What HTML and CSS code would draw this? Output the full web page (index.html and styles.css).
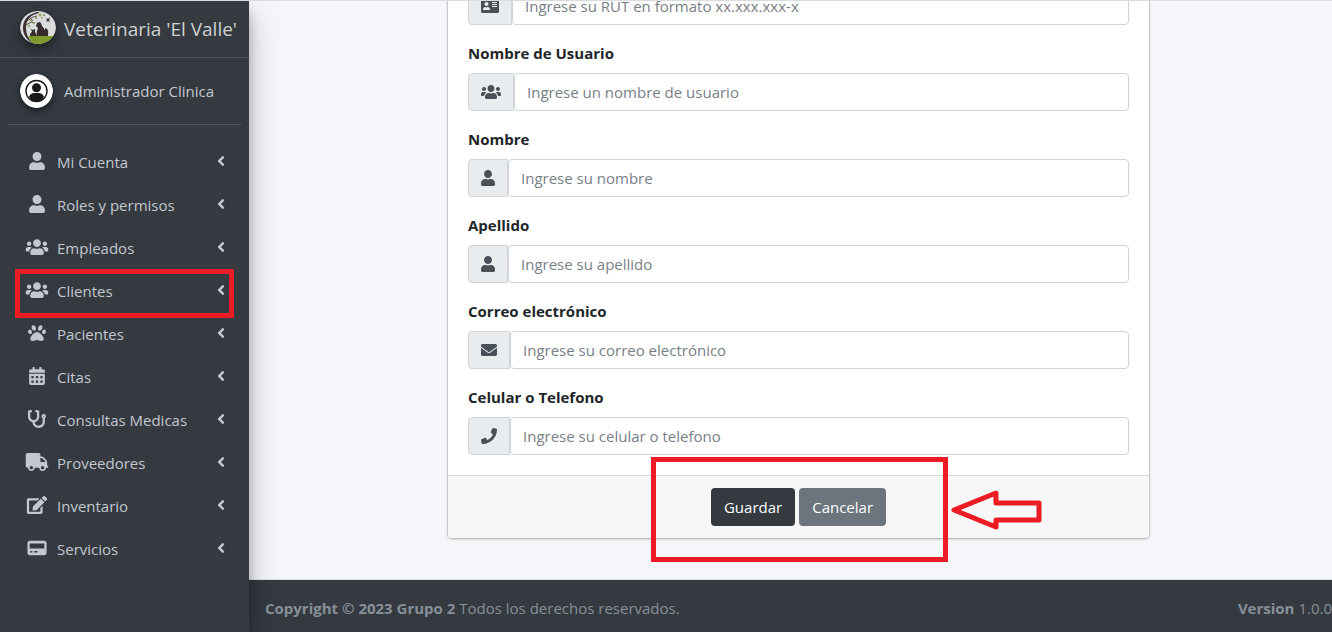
FILE: index.html
```html
<!DOCTYPE html>
<html lang="es">
<head>
<meta charset="utf-8">
<meta name="viewport" content="width=device-width, initial-scale=1">
<title>Veterinaria 'El Valle'</title>
<link rel="stylesheet" href="styles.css">
</head>
<body>
<svg class="sprite" aria-hidden="true">
  <symbol id="user" viewBox="0 0 448 512"><path d="M224 256c70.7 0 128-57.3 128-128S294.7 0 224 0 96 57.3 96 128s57.3 128 128 128zm89.6 32h-16.7c-22.2 10.2-46.9 16-72.9 16s-50.6-5.8-72.9-16h-16.7C60.2 288 0 348.2 0 422.4V464c0 26.5 21.5 48 48 48h352c26.5 0 48-21.5 48-48v-41.6c0-74.2-60.2-134.4-134.4-134.4z"/></symbol>
  <symbol id="users" viewBox="0 0 640 512"><path d="M96 224c35.3 0 64-28.7 64-64s-28.7-64-64-64-64 28.7-64 64 28.7 64 64 64zm448 0c35.3 0 64-28.7 64-64s-28.7-64-64-64-64 28.7-64 64 28.7 64 64 64zm32 32h-64c-17.6 0-33.5 7.1-45.1 18.6 40.3 22.1 68.9 62 75.1 109.4h66c17.7 0 32-14.3 32-32v-32c0-35.3-28.7-64-64-64zm-256 0c61.9 0 112-50.1 112-112S381.9 32 320 32 208 82.1 208 144s50.1 112 112 112zm76.8 32h-8.3c-20.8 10-43.9 16-68.5 16s-47.6-6-68.5-16h-8.3C179.6 288 128 339.6 128 403.2V432c0 26.5 21.5 48 48 48h288c26.5 0 48-21.5 48-48v-28.8c0-63.6-51.6-115.2-115.2-115.2zm-223.7-13.4C161.5 263.1 145.6 256 128 256H64c-35.3 0-64 28.7-64 64v32c0 17.7 14.3 32 32 32h65.9c6.3-47.4 34.9-87.3 75.2-109.4z"/></symbol>
  <symbol id="paw" viewBox="0 0 512 512"><path d="M256 224c-79.41 0-192 122.76-192 200.25 0 34.9 26.81 55.75 71.74 55.75 48.84 0 81.09-25.08 120.26-25.08 39.51 0 71.85 25.08 120.26 25.08 44.93 0 71.74-20.85 71.74-55.75C448 346.76 335.41 224 256 224zm-147.28-12.61c-10.4-34.65-42.44-57.09-71.56-50.13-29.12 6.96-44.29 40.69-33.89 75.34 10.4 34.65 42.44 57.09 71.56 50.13 29.12-6.96 44.29-40.69 33.89-75.34zm84.72-20.78c30.94-8.14 42.92-48.8 26.76-90.8-16.16-42.01-54.34-69.46-85.28-61.32-30.94 8.14-42.92 48.8-26.76 90.8 16.17 42.01 54.35 69.46 85.28 61.32zm281.39-29.35c-29.12-6.96-61.15 15.48-71.56 50.13-10.4 34.65 4.77 68.38 33.89 75.34 29.12 6.96 61.15-15.48 71.56-50.13 10.4-34.65-4.77-68.38-33.89-75.34zm-156.27 29.35c30.94 8.14 69.11-19.31 85.28-61.32 16.16-42.01 4.18-82.66-26.76-90.8-30.94-8.14-69.12 19.31-85.28 61.32-16.16 42-4.18 82.66 26.76 90.8z"/></symbol>
  <symbol id="calendar" viewBox="0 0 448 512"><path fill-rule="evenodd" d="M0 464c0 26.500 21.500 48 48 48h352c26.500 0 48-21.500 48-48V192H0v272zM64 256h64v64H64zM192 256h64v64h-64zM320 256h64v64h-64zM64 384h64v64H64zM192 384h64v64h-64zM320 384h64v64h-64zM400 64h-48V16c0-8.800-7.200-16-16-16h-32c-8.800 0-16 7.200-16 16v48H160V16c0-8.800-7.200-16-16-16h-32c-8.800 0-16 7.200-16 16v48H48C21.500 64 0 85.500 0 112v48h448v-48c0-26.500-21.500-48-48-48z"/></symbol>
  <symbol id="stethoscope" viewBox="0 0 512 512"><path d="M447.1 112c-34.2.5-62.3 28.4-63 62.6-.5 24.3 12.5 45.6 32 56.8V344c0 57.3-50.2 104-112 104-60 0-109.2-44.1-111.9-99.2C265 333.800 320 269.200 320 192V36.600c0-11.400-8.100-21.300-19.300-23.500L237.800.500c-13-2.600-25.600 5.800-28.200 18.800L206.400 35c-2.600 13 5.800 25.600 18.800 28.200l30.700 6.100v121.400c0 52.900-42.200 96.700-95.100 97.200-53.400.5-96.900-42.700-96.900-96V69.400l30.700-6.100c13-2.600 21.400-15.200 18.800-28.200l-3.100-15.700C107.700 6.400 95.100-2 82.100.6L19.300 13C8.100 15.300 0 25.100 0 36.600V192c0 77.300 55.100 142 128.100 156.800C130.700 439.200 208.600 512 304 512c97 0 176-75.400 176-168V231.400c19.100-11.100 32-31.700 32-55.400 0-35.700-29.200-64.500-64.900-64zm.9 80c-8.800 0-16-7.200-16-16s7.200-16 16-16 16 7.200 16 16-7.200 16-16 16z"/></symbol>
  <symbol id="truck" viewBox="0 0 640 512"><path d="M624 352h-16V243.900c0-12.700-5.100-24.900-14.100-33.900L494 110.100c-9-9-21.200-14.100-33.900-14.100H416V48c0-26.500-21.500-48-48-48H48C21.500 0 0 21.500 0 48v320c0 26.500 21.500 48 48 48h16c0 53 43 96 96 96s96-43 96-96h128c0 53 43 96 96 96s96-43 96-96h48c8.800 0 16-7.200 16-16v-32c0-8.800-7.200-16-16-16zM160 464c-26.500 0-48-21.500-48-48s21.500-48 48-48 48 21.500 48 48-21.500 48-48 48zm320 0c-26.500 0-48-21.500-48-48s21.500-48 48-48 48 21.500 48 48-21.500 48-48 48zm80-208H416V144h44.100l99.900 99.900V256z"/></symbol>
  <symbol id="edit" viewBox="0 0 576 512"><path d="M402.600 83.200l90.200 90.200c3.800 3.800 3.800 10 0 13.800L274.400 405.600l-92.800 10.300c-12.400 1.400-22.900-9.100-21.500-21.500l10.300-92.800L388.800 83.200c3.800-3.800 10-3.800 13.800 0zm162-22.900l-48.800-48.800c-15.200-15.200-39.900-15.200-55.200 0l-35.400 35.400c-3.800 3.800-3.800 10 0 13.800l90.200 90.200c3.800 3.800 10 3.800 13.800 0l35.400-35.400c15.200-15.300 15.200-40 0-55.200zM384 346.200V448H64V128h229.800c3.200 0 6.200-1.300 8.500-3.500l40-40c7.600-7.600 2.200-20.500-8.500-20.500H48C21.500 64 0 85.500 0 112v352c0 26.500 21.500 48 48 48h352c26.500 0 48-21.500 48-48V306.200c0-10.700-12.900-16-20.500-8.500l-40 40c-2.200 2.300-3.500 5.300-3.500 8.500z"/></symbol>
  <symbol id="service" viewBox="0 0 576 512"><path fill-rule="evenodd" d="M80 48h416c35 0 64 29 64 64v288c0 35-29 64-64 64H80c-35 0-64-29-64-64V112c0-35 29-64 64-64zM80 128v144h416V128zM96 344v40h64v-40zM208 344v40h96v-40z"/></symbol>
  <symbol id="angle" viewBox="0 0 256 512"><path d="M31.700 239l136-136c9.400-9.400 24.600-9.400 33.900 0l22.600 22.600c9.400 9.400 9.400 24.600 0 33.900L127.900 256l96.400 96.400c9.400 9.400 9.400 24.600 0 33.900L201.700 409c-9.400 9.400-24.600 9.400-33.900 0l-136-136c-9.500-9.400-9.500-24.600-.1-34z"/></symbol>
  <symbol id="idcard" viewBox="0 0 576 512"><path fill-rule="evenodd" d="M528 32H48C21.500 32 0 53.500 0 80v352c0 26.500 21.500 48 48 48h480c26.500 0 48-21.500 48-48V80c0-26.500-21.500-48-48-48zM176 128c35.300 0 64 28.700 64 64s-28.700 64-64 64-64-28.700-64-64 28.700-64 64-64zM64 372c0-46 30-84 67-84 28 13 62 13 90 0 37 0 67 38 67 84 0 7-8 12-19 12H83c-11 0-19-5-19-12zM352 128h160v32H352zM352 192h160v32H352zM352 256h160v32H352z"/></symbol>
  <symbol id="envelope" viewBox="0 0 512 512"><path d="M502.300 190.800c3.900-3.100 9.700-.2 9.700 4.700V400c0 26.500-21.500 48-48 48H48c-26.500 0-48-21.500-48-48V195.600c0-5 5.700-7.800 9.700-4.700 22.400 17.400 52.100 39.500 154.100 113.600 21.100 15.400 56.700 47.800 92.200 47.600 35.700.3 72-32.800 92.300-47.600 102-74.100 131.600-96.300 154-113.700zM256 320c23.200.4 56.600-29.200 73.400-41.400 132.700-96.300 142.800-104.700 173.400-128.700 5.800-4.500 9.200-11.500 9.200-18.900v-19c0-26.500-21.500-48-48-48H48c-26.500 0-48 21.500-48 48v19c0 7.400 3.400 14.300 9.200 18.900 30.600 23.900 40.700 32.400 173.400 128.700 16.800 12.200 50.200 41.800 73.400 41.400z"/></symbol>
  <symbol id="phone" viewBox="0 0 512 512"><path d="M493.400 24.600l-104-24c-11.300-2.600-22.900 3.300-27.500 13.900l-48 112c-4.200 9.800-1.400 21.300 6.900 28l60.600 49.600c-36 76.700-98.900 140.500-177.200 177.200l-49.600-60.600c-6.800-8.300-18.200-11.100-28-6.900l-112 48C3.900 366.500-2 378.100.6 389.400l24 104C27.100 504.200 36.700 512 48 512c256.100 0 464-207.500 464-464 0-11.200-7.700-20.900-18.600-23.400z"/></symbol>
</svg>

<div class="app">
  <aside class="sidebar">
    <a class="brand" href="#">
      <svg class="brand-logo" viewBox="0 0 36 33" aria-hidden="true">
        <defs><clipPath id="logo-clip"><ellipse cx="18" cy="16.500" rx="18" ry="16.500"/></clipPath></defs>
        <g clip-path="url(#logo-clip)">
          <rect width="36" height="33" fill="#d9dbdc"/>
          <path d="M8 25h26v8H13z" fill="#7d9a2d"/>
          <path d="M19 1C9 2 3 8 3 17c0 7 4 12 10 15.500C9 28 6 24 6 17 6 9 10 4 19 2z" fill="#3c3030"/>
          <path d="M6 10c4-1 6-5 11-5M6 14l5-3 4 1M9 6l4 4" fill="none" stroke="#4b3d3a" stroke-width=".9"/>
          <g fill="#9aab68"><circle cx="11" cy="10" r="1.200"/><circle cx="16" cy="7" r="1.300"/><circle cx="20" cy="4" r="1.500"/><circle cx="24" cy="4" r="1.200"/><circle cx="9" cy="15" r="1.200"/><circle cx="14" cy="12" r="1"/><circle cx="22" cy="7" r="1"/></g>
          <path d="M17 25c-1-3 0-5 1-8l-2-2 1-3 2-1 2 1 1 3c2 2 4 5 4 10z" fill="#342b2b"/>
          <path d="M10 25c0-3 1-3 2-4l-1-3 2 1 2-1v3l2 4zM25 25c-1-3-1-4 0-6v-2l2 1c2 2 1 4 1 7z" fill="#342b2b"/>
          <path d="M26 7l2 1 2-2-1 3 1 2-2-1-2 1 1-2z" fill="#342b2b"/>
        </g>
      </svg>
      <span>Veterinaria 'El Valle'</span>
    </a>
    <div class="account">
      <svg class="avatar" viewBox="0 0 33 34" aria-hidden="true">
        <ellipse cx="16.500" cy="17" rx="16.500" ry="17" fill="#fff"/>
        <circle cx="16.500" cy="17" r="10.500" fill="none" stroke="#17191b" stroke-width="1.400"/>
        <circle cx="16.500" cy="13.700" r="4.500" fill="#17191b"/>
        <path d="M9 23c1-3 3-4 5-4h5c2 0 4 1 5 4-2 3-4 5-7.500 5S11 26 9 23z" fill="#17191b"/>
      </svg>
      <a href="#">Administrador Clinica</a>
    </div>
    <nav>
      <ul class="menu">
        <li><a href="#"><svg class="icon"><use href="#user"/></svg><span>Mi Cuenta</span><svg class="arrow"><use href="#angle"/></svg></a></li>
        <li><a href="#"><svg class="icon"><use href="#user"/></svg><span>Roles y permisos</span><svg class="arrow"><use href="#angle"/></svg></a></li>
        <li><a href="#"><svg class="icon"><use href="#users"/></svg><span>Empleados</span><svg class="arrow"><use href="#angle"/></svg></a></li>
        <li class="marked"><a href="#"><svg class="icon"><use href="#users"/></svg><span>Clientes</span><svg class="arrow"><use href="#angle"/></svg></a></li>
        <li><a href="#"><svg class="icon"><use href="#paw"/></svg><span>Pacientes</span><svg class="arrow"><use href="#angle"/></svg></a></li>
        <li><a href="#"><svg class="icon"><use href="#calendar"/></svg><span>Citas</span><svg class="arrow"><use href="#angle"/></svg></a></li>
        <li><a href="#"><svg class="icon"><use href="#stethoscope"/></svg><span>Consultas Medicas</span><svg class="arrow"><use href="#angle"/></svg></a></li>
        <li><a href="#"><svg class="icon"><use href="#truck"/></svg><span>Proveedores</span><svg class="arrow"><use href="#angle"/></svg></a></li>
        <li><a href="#"><svg class="icon"><use href="#edit"/></svg><span>Inventario</span><svg class="arrow"><use href="#angle"/></svg></a></li>
        <li><a href="#"><svg class="icon"><use href="#service"/></svg><span>Servicios</span><svg class="arrow"><use href="#angle"/></svg></a></li>
      </ul>
    </nav>
  </aside>

  <div class="page">
    <main class="content">
      <form class="card">
        <div class="card-body">
          <div class="field">
            <div class="group"><span class="addon"><svg class="w18"><use href="#idcard"/></svg></span><input id="rut" type="text" aria-label="RUT" placeholder="Ingrese su RUT en formato xx.xxx.xxx-x"></div>
          </div>
          <div class="field">
            <label for="usuario">Nombre de Usuario</label>
            <div class="group"><span class="addon"><svg class="w20"><use href="#users"/></svg></span><input id="usuario" type="text" placeholder="Ingrese un nombre de usuario"></div>
          </div>
          <div class="field">
            <label for="nombre">Nombre</label>
            <div class="group"><span class="addon"><svg class="w14"><use href="#user"/></svg></span><input id="nombre" type="text" placeholder="Ingrese su nombre"></div>
          </div>
          <div class="field">
            <label for="apellido">Apellido</label>
            <div class="group"><span class="addon"><svg class="w14"><use href="#user"/></svg></span><input id="apellido" type="text" placeholder="Ingrese su apellido"></div>
          </div>
          <div class="field">
            <label for="correo">Correo electrónico</label>
            <div class="group"><span class="addon"><svg class="w16"><use href="#envelope"/></svg></span><input id="correo" type="email" placeholder="Ingrese su correo electrónico"></div>
          </div>
          <div class="field">
            <label for="telefono">Celular o Telefono</label>
            <div class="group"><span class="addon"><svg class="w16"><use href="#phone"/></svg></span><input id="telefono" type="tel" placeholder="Ingrese su celular o telefono"></div>
          </div>
        </div>
        <div class="card-footer">
          <button class="btn dark" type="submit">Guardar</button>
          <button class="btn gray" type="button">Cancelar</button>
          <span class="frame"></span>
          <svg class="pointer" viewBox="0 0 92 40" aria-hidden="true"><path d="M3 20L45 3v10h43v17H45v7z" fill="none" stroke="#ed1c24" stroke-width="5" stroke-linejoin="round"/></svg>
        </div>
      </form>
    </main>
    <footer class="footer">
      <span><strong>Copyright © 2023 Grupo 2</strong> Todos los derechos reservados.</span>
      <span><strong>Version</strong> 1.0.0</span>
    </footer>
  </div>
</div>
</body>
</html>
```
FILE: styles.css
```css
*, *::before, *::after { box-sizing: border-box; }

body {
  margin: 0;
  font-family: "Open Sans", "Noto Sans", sans-serif;
  font-size: 15px;
  line-height: 24px;
  color: #212529;
  background: #f4f6f9;
}

a { color: inherit; text-decoration: none; }
svg { fill: currentColor; flex: none; }
.sprite { display: none; }

.app {
  display: grid;
  grid-template-columns: 249px 1fr;
  height: 100vh;
  border-top: 1px solid #dadcdf;
  overflow: hidden;
}

.sidebar {
  position: relative;
  z-index: 1;
  color: #c2c7d0;
  background: #343a40;
  box-shadow: 0 14px 28px rgba(0, 0, 0, .25), 0 10px 10px rgba(0, 0, 0, .22);
}

.brand {
  display: flex;
  align-items: center;
  gap: 8px;
  height: 57px;
  padding: 0 0 0 20px;
  border-bottom: 1px solid #4b545c;
  font-size: 19px;
  color: #cfd1d3;
}
.brand-logo {
  width: 36px;
  height: 33px;
  margin-bottom: 4px;
  border-radius: 50%;
  box-shadow: 0 3px 6px rgba(0, 0, 0, .3), 0 8px 16px rgba(0, 0, 0, .2);
}

.account {
  display: flex;
  align-items: center;
  gap: 11px;
  margin: 0 8px;
  padding: 16px 0 16px 12px;
  border-bottom: 1px solid #4f5962;
}
.avatar {
  width: 33px;
  height: 34px;
  border-radius: 50%;
  box-shadow: 0 3px 6px rgba(0, 0, 0, .3), 0 3px 6px rgba(0, 0, 0, .2);
}

.menu {
  display: flex;
  flex-direction: column;
  gap: 3px;
  margin: 0;
  padding: 17px 8px;
  list-style: none;
}
.menu li { position: relative; }
.menu a {
  display: flex;
  align-items: center;
  gap: 7px;
  padding: 8px 15px 8px 16px;
}
.menu span { flex: 1; }
.icon { width: 26px; height: 18px; margin-bottom: 2px; }
.arrow { width: 10px; height: 16px; margin-bottom: 2px; }
.marked::after {
  content: "";
  position: absolute;
  inset: -2px 7px -7px;
  border: 5px solid #ed1c24;
}

.page {
  display: flex;
  flex-direction: column;
  min-width: 0;
  min-height: 0;
}
.content {
  display: flex;
  flex: 1;
  flex-direction: column;
  justify-content: flex-end;
  align-items: center;
  min-height: 0;
  padding: 0 0 41px 16px;
  overflow: hidden;
}

.card {
  flex: none;
  width: 100%;
  max-width: 701px;
  border-radius: 4px;
  background: #fff;
  box-shadow: 0 0 1px 1px rgba(0, 0, 0, .13), 0 1px 3px rgba(0, 0, 0, .2);
}
.card-body {
  display: flex;
  flex-direction: column;
  gap: 16px;
  padding: 20px;
}
.field label {
  display: block;
  margin-bottom: 8px;
  font-weight: 700;
}
.group { display: flex; }
.addon {
  display: flex;
  align-items: center;
  padding: 0 12px;
  border: 1px solid #ced4da;
  border-radius: 4px 0 0 4px;
  color: #495057;
  background: #e9ecef;
}
.addon svg { height: 16px; }
.w14 { width: 14px; }
.w16 { width: 16px; }
.w18 { width: 18px; }
.w20 { width: 20px; }
.group input {
  flex: 1;
  min-width: 0;
  height: 38px;
  padding: 6px 12px;
  border: 1px solid #ced4da;
  border-radius: 4px;
  font: inherit;
  color: #495057;
  background: #fff;
}
.group input::placeholder { color: #788087; opacity: 1; }

.card-footer {
  position: relative;
  display: flex;
  justify-content: center;
  gap: 4px;
  padding: 12px 20px;
  border-top: 1px solid #d7d7d8;
  border-radius: 0 0 4px 4px;
  background: #f7f7f7;
}
.btn {
  height: 38px;
  padding: 6px 12px;
  border: 1px solid transparent;
  border-radius: 4px;
  font: inherit;
  color: #fff;
}
.dark { background: #343a40; }
.gray { background: #6c757d; }
.frame {
  position: absolute;
  top: -19px;
  left: calc(50% - 148px);
  width: 297px;
  height: 105px;
  border: 5px solid #ed1c24;
}
.pointer {
  position: absolute;
  top: 14px;
  left: calc(50% + 152px);
  width: 92px;
  height: 40px;
}

.footer {
  display: flex;
  justify-content: space-between;
  padding: 16px 0 12px 16px;
  border-top: 1px solid #dee2e6;
  color: #869099;
  background: #343a40;
}
```
